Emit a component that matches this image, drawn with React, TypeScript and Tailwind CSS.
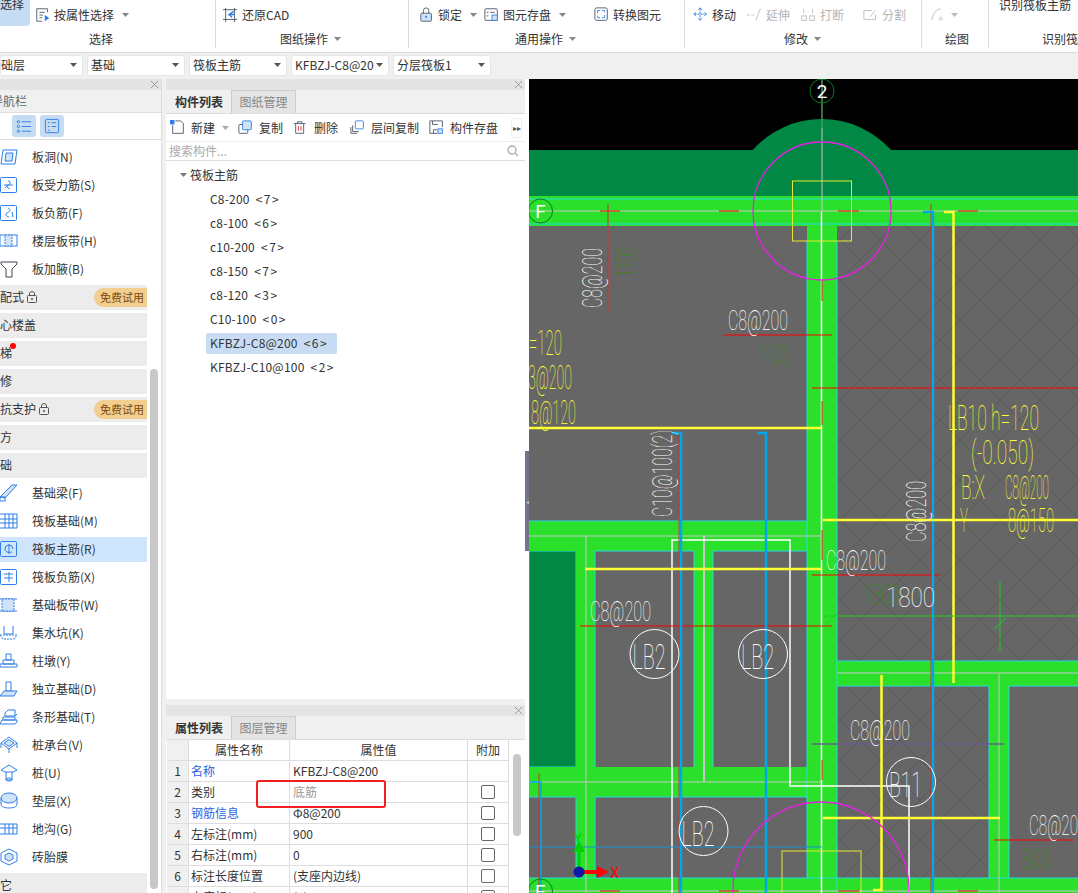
import type { ReactNode } from "react";

const B = "#2f7fe6";
const L = "#cfe2fa";

function Caret({ c = "#888" }: { c?: string }) {
  return (
    <svg width="7" height="4" viewBox="0 0 7 4" className="shrink-0">
      <path d="M0 0h7L3.5 4z" fill={c} />
    </svg>
  );
}

function Ico({ children, w = 18, c = B }: { children: ReactNode; w?: number; c?: string }) {
  return (
    <svg width={w} height={w} viewBox="0 0 18 18" fill="none" stroke={c} strokeWidth="1" className="shrink-0">
      {children}
    </svg>
  );
}

const DK = "#4a5568";

function TopItem({ icon, text, caret, off, ml }: { icon: ReactNode; text: string; caret?: boolean; off?: boolean; ml: string }) {
  return (
    <div className={`flex items-center gap-[3px] ${ml} ${off ? "text-[#b4b4b4]" : "text-[#333]"}`}>
      <Ico w={16}>{icon}</Ico>
      <span>{text}</span>
      {caret && <span className="ml-[5px]"><Caret /></span>}
    </div>
  );
}

function Ribbon() {
  return (
    <div className="flex h-[53px] shrink-0 border-b border-[#dcdcdc] bg-white text-[12px] text-[#333]">
      <div className="w-[215px]">
        <div className="flex h-[27px] items-start">
          <div className="h-[26px] w-[30px] overflow-hidden rounded-br-[4px] bg-[#c5dcf3] pl-0 text-[12px] leading-[8px]">选择</div>
          <div className="mt-[6px] ml-[5px] flex items-center gap-[3px]">
            <Ico w={16}>
              <path d="M14 6V2H2v14h6M5 6h6M5 9h4M5 12h3" stroke={DK} />
              <path d="M11 9l5 3.5-5 3.5z" fill={B} stroke="none" />
            </Ico>
            <span>按属性选择</span>
            <span className="ml-[5px]"><Caret /></span>
          </div>
        </div>
        <div className="pl-[89px] leading-[24px]">选择</div>
      </div>
      <div className="h-12 w-px bg-[#ddd]" />
      <div className="w-[192px]">
        <div className="flex h-[27px] items-center pt-[3px]">
          <TopItem
            ml="ml-[7px]"
            text="还原CAD"
            icon={
              <>
                <path d="M3 1v16M13 1v16M0 3h16M0 14h16" stroke={DK} />
                <path d="M12 5L7 8.500h6M7 8.500l3 3" stroke={B} strokeWidth="1.600" />
              </>
            }
          />
        </div>
        <div className="flex items-center gap-[6px] pl-[64px] leading-[24px]">图纸操作<Caret /></div>
      </div>
      <div className="h-12 w-px bg-[#ddd]" />
      <div className="w-[275px]">
        <div className="flex h-[27px] items-center pt-[3px]">
          <TopItem
            ml="ml-[10px]"
            text="锁定"
            caret
            icon={
              <>
                <rect x="2" y="7" width="12" height="9" rx="1.500" stroke={DK} fill={L} />
                <path d="M5 7V4a3 3 0 016 0v3" stroke={DK} />
                <circle cx="8" cy="11" r="1.200" fill={B} stroke="none" />
              </>
            }
          />
          <TopItem
            ml="ml-[7px]"
            text="图元存盘"
            caret
            icon={
              <>
                <rect x="1" y="2" width="14" height="13" rx="1" stroke={DK} />
                <path d="M3 6h2M7 6h5M3 10h2" stroke={DK} />
                <rect x="9" y="9" width="6" height="6" fill={L} stroke={B} />
              </>
            }
          />
          <TopItem
            ml="ml-[28px]"
            text="转换图元"
            icon={
              <>
                <rect x="1" y="1" width="14" height="14" rx="2" stroke={DK} />
                <path d="M4 7V4h3M12 9v3H9M9 4h3v2M7 12H4v-2" stroke={B} />
              </>
            }
          />
        </div>
        <div className="flex items-center gap-[6px] pl-[106px] leading-[24px]">通用操作<Caret /></div>
      </div>
      <div className="h-12 w-px bg-[#ddd]" />
      <div className="w-[236px]">
        <div className="flex h-[27px] items-center pt-[3px]">
          <TopItem
            ml="ml-[8px]"
            text="移动"
            icon={<path d="M8 1v14M1 8h14M8 1L6 3.500M8 1l2 2.500M8 15l-2-2.500M8 15l2-2.500M1 8l2.500-2M1 8l2.500 2M15 8l-2.500-2M15 8l-2.500 2" strokeDasharray="3 1" />}
          />
          <TopItem
            off
            ml="ml-[11px]"
            text="延伸"
            icon={<path d="M0 9h3M5 9h3M10 15l5-13" stroke="#bbb" />}
          />
          <TopItem
            off
            ml="ml-[11px]"
            text="打断"
            icon={
              <>
                <rect x="1" y="10" width="5" height="5" stroke="#bbb" />
                <rect x="10" y="10" width="5" height="5" stroke="#bbb" />
                <path d="M3 2v5M13 2v5" stroke="#bbb" />
              </>
            }
          />
          <TopItem
            off
            ml="ml-[19px]"
            text="分割"
            icon={<path d="M10 4H1v10h13V8M8 11l6-7" stroke="#bbb" />}
          />
        </div>
        <div className="flex items-center gap-[6px] pl-[99px] leading-[24px]">修改<Caret /></div>
      </div>
      <div className="h-12 w-px bg-[#ddd]" />
      <div className="w-[66px]">
        <div className="flex h-[27px] items-center gap-[5px] pt-[3px] pl-[8px]">
          <Ico w={16}><path d="M2 15C3 7 7 3 12 2" stroke="#bbb" /><circle cx="12" cy="13" r="1.500" stroke="#bbb" /></Ico>
          <Caret c="#bbb" />
        </div>
        <div className="pl-[23px] leading-[24px]">绘图</div>
      </div>
      <div className="h-12 w-px bg-[#ddd]" />
      <div className="min-w-0 flex-1 overflow-hidden whitespace-nowrap">
        <div className="h-[27px] pl-[10px] leading-[9px]">识别筏板主筋</div>
        <div className="pl-[53px] leading-[24px]">识别筏板</div>
      </div>
    </div>
  );
}

function Select({ w, text, first }: { w: string; text: string; first?: boolean }) {
  return (
    <div className={`flex h-[21px] items-center justify-between rounded-[3px] border border-[#e6e6e6] bg-white pr-[5px] ${first ? "pl-0" : "pl-[3px]"} ${w}`}>
      <span className="overflow-hidden whitespace-nowrap">{text}</span>
      <span className="ml-[2px]"><Caret c="#555" /></span>
    </div>
  );
}

function Selectors() {
  return (
    <div className="flex h-[26px] shrink-0 items-center gap-[4px] bg-[#f0f0f0] pb-[2px] text-[12px] text-[#333]">
      <Select first w="w-[83px]" text="础层" />
      <Select w="w-[98px]" text="基础" />
      <Select w="w-[98px]" text="筏板主筋" />
      <Select w="w-[98px]" text="KFBZJ-C8@200" />
      <Select w="w-[98px]" text="分层筏板1" />
    </div>
  );
}

function TitleBar() {
  return (
    <div className="flex h-[11px] shrink-0 items-center justify-end bg-[#e4e4e4] pr-[3px]">
      <svg width="7" height="7" viewBox="0 0 7 7" stroke="#999"><path d="M0 0l7 7M7 0L0 7" /></svg>
    </div>
  );
}

function Lock() {
  return (
    <svg width="10" height="12" viewBox="0 0 10 12" fill="none" stroke="#555" className="ml-[3px]">
      <rect x="0.500" y="4.500" width="9" height="7" rx="1" />
      <path d="M2.500 4.500V3a2.500 2.500 0 015 0v1.500" />
      <circle cx="5" cy="8" r="1" fill="#555" stroke="none" />
    </svg>
  );
}

function Trial() {
  return (
    <span className="mt-[2px] ml-auto flex h-[19px] w-[53px] items-center justify-center rounded-l-full bg-[#f2cf8e] pl-[3px] text-[11px] text-[#7a4a10]">
      免费试用
    </span>
  );
}

const box = <rect x="0.500" y="1.500" width="16" height="15" rx="1" />;

const navItems: { name: string; icon?: ReactNode; head?: boolean; sel?: boolean; lock?: boolean; dot?: boolean }[] = [
  { name: "板洞(N)", icon: <><path d="M3 2h14l-2 14H1z" /><path d="M6 5h7l-1 8H5z" fill={L} /></> },
  { name: "板受力筋(S)", icon: <>{box}<path d="M4 9h9M8 5c3 0 3 3 0 4s1 4 2 4M5 12l3-3" /></> },
  { name: "板负筋(F)", icon: <>{box}<path d="M8 4c3 1 2 4-1 5s0 4 2 4M12 8l1 5" /></> },
  { name: "楼层板带(H)", icon: <><rect x="0" y="3" width="17" height="11" /><rect x="5" y="3" width="7" height="11" fill={L} strokeDasharray="2 1" /></> },
  { name: "板加腋(B)", icon: <path d="M1 2h16v2l-5 5v8H6V9L1 4z" stroke="#445" /> },
  { name: "配式", head: true, lock: true },
  { name: "心楼盖", head: true },
  { name: "梯", head: true, dot: true },
  { name: "修", head: true },
  { name: "抗支护", head: true, lock: true },
  { name: "方", head: true },
  { name: "础", head: true },
  { name: "基础梁(F)", icon: <><path d="M0 13L12 1h5L5 14z" fill={L} /><rect x="0" y="13" width="5" height="4" /></> },
  { name: "筏板基础(M)", icon: <path d="M0 2h17v14H0M0 7h17M0 11h17M5 2v14M9 2v14M13 2v14" /> },
  { name: "筏板主筋(R)", sel: true, icon: <>{box}<path d="M9 4v10M5 9a4 4 0 018 0" /><path d="M5 9c0 3 3 4 7 3" /></> },
  { name: "筏板负筋(X)", icon: <>{box}<path d="M4 6h9M4 10h9M9 4v10" /></> },
  { name: "基础板带(W)", icon: <><path d="M0 3h17M0 15h17" /><rect x="2" y="3" width="12" height="12" fill={L} strokeDasharray="2 1" /></> },
  { name: "集水坑(K)", icon: <><path d="M4 2v8h9V2" /><path d="M0 11h17l-3 4H3z" strokeDasharray="2 1" /></> },
  { name: "柱墩(Y)", icon: <path d="M6 2h5v6H6zM3 8h11v4H3zM0 12h17v3H0z" /> },
  { name: "独立基础(D)", icon: <><path d="M6 2h5v9H6z" /><path d="M0 16l4-5h13l-3 5z" fill={L} /></> },
  { name: "条形基础(T)", icon: <path d="M5 5l3-3h7v6H5zM3 9h12v3H3zM0 16l2-4h15v2l-2 2zM15 8l2-2" /> },
  { name: "桩承台(V)", icon: <><path d="M9 1l8 6-8 6-8-6z" /><path d="M1 7v5M17 7v5M9 13v4" /><path d="M4 7l5-3.500 5 3.500-5 3.500z" fill={L} /></> },
  { name: "桩(U)", icon: <><path d="M1 6l8-5 8 5-4 2H5z" /><path d="M6 8v8h6V8" /><ellipse cx="9" cy="15.500" rx="3" ry="1.500" /></> },
  { name: "垫层(X)", icon: <><ellipse cx="9" cy="6" rx="8" ry="5" fill={L} /><path d="M1 6v6c0 3 4 4 8 4s8-1 8-4V6" /></> },
  { name: "地沟(G)", icon: <path d="M0 4h17v10H0M0 8h17M5 4v10M9 4v10M13 4v10" /> },
  { name: "砖胎膜", icon: <><path d="M9 1l8 4v8l-8 4-8-4V5z" /><path d="M9 5l4 2v4l-4 2-4-2V7z" fill={L} /></> },
  { name: "它", head: true },
];

function LeftPanel() {
  return (
    <div className="flex w-[162px] shrink-0 flex-col overflow-hidden border-r border-[#ddd] bg-white text-[12px] text-[#333]">
      <TitleBar />
      <div className="flex h-[23px] shrink-0 items-center overflow-hidden border-b border-[#ddd] bg-[#f0f0f0] whitespace-nowrap text-[#666]">
        <span className="-ml-[9px]">导航栏</span>
      </div>
      <div className="flex h-[27px] shrink-0 items-center gap-[4px] border-b border-[#ddd] pl-[12px]">
        <div className="flex h-[22px] w-[24px] items-center justify-center rounded-[3px] bg-[#c5dcf3]">
          <Ico w={17}><path d="M6 4h10M6 9h10M6 14h10" /><circle cx="2.500" cy="4" r="1.200" /><circle cx="2.500" cy="9" r="1.200" /><circle cx="2.500" cy="14" r="1.200" /></Ico>
        </div>
        <div className="flex h-[22px] w-[24px] items-center justify-center rounded-[3px] bg-[#c5dcf3]">
          <Ico w={17}><rect x="1.500" y="1.500" width="14" height="14" rx="1" /><path d="M4 5h2M8 5h5M4 9h2M8 9h5M4 13h2" /></Ico>
        </div>
      </div>
      <div className="flex min-h-0 flex-1 pt-[5px]">
        <div className="w-[147px] shrink-0">
          {navItems.map((n) => (
            <div
              key={n.name}
              className={`relative mb-[3px] flex h-[25px] items-center pb-[2px] whitespace-nowrap ${n.head ? "bg-[#ececec]" : ""} ${n.sel ? "bg-[#cfe5fd]" : ""}`}
            >
              {n.icon && (
                <span className="w-[32px] shrink-0">
                  <Ico c={n.name === "板加腋(B)" ? "#445" : B}>{n.icon}</Ico>
                </span>
              )}
              <span>{n.name}</span>
              {n.lock && <Lock />}
              {n.lock && <Trial />}
              {n.dot && <span className="absolute top-[2px] left-[10px] h-[6px] w-[6px] rounded-full bg-[#f00]" />}
            </div>
          ))}
        </div>
        <div className="mt-[224px] ml-[3px] h-[520px] w-[8px] shrink-0 rounded-full bg-[#c8c8c8]" />
      </div>
    </div>
  );
}

function Tabs({ a, b }: { a: string; b: string }) {
  return (
    <div className="flex h-[24px] shrink-0 items-end border-b border-[#ddd] bg-[#f0f0f0] pl-px text-[12px]">
      <div className="flex h-[23px] w-[64px] items-center justify-center font-bold text-[#333]">{a}</div>
      <div className="flex h-[23px] w-[65px] items-center justify-center border border-b-0 border-[#ccc] bg-[#e4e4e4] text-[#888]">{b}</div>
    </div>
  );
}

function ToolBtn({ icon, text, ml }: { icon: ReactNode; text: string; ml: string }) {
  return (
    <div className={`flex items-center gap-[5px] ${ml}`}>
      <Ico w={16}>{icon}</Ico>
      <span className="whitespace-nowrap">{text}</span>
    </div>
  );
}

const comps = [
  ["C8-200", "<7>"],
  ["c8-100", "<6>"],
  ["c10-200", "<7>"],
  ["c8-150", "<7>"],
  ["c8-120", "<3>"],
  ["C10-100", "<0>"],
  ["KFBZJ-C8@200", "<6>"],
  ["KFBZJ-C10@100", "<2>"],
];

function ComponentList() {
  return (
    <div className="flex h-[620px] shrink-0 flex-col bg-white text-[12px] text-[#333]">
      <TitleBar />
      <Tabs a="构件列表" b="图纸管理" />
      <div className="flex h-[28px] shrink-0 items-center border-b border-[#eee]">
        <ToolBtn
          ml="ml-[4px]"
          text="新建"
          icon={
            <>
              <path d="M3 6v9h12V4l-3-3H6" stroke={DK} />
              <rect x="0" y="0" width="5" height="5" fill={B} stroke="none" />
            </>
          }
        />
        <span className="mr-[9px] ml-[7px]"><Caret c="#aaa" /></span>
        <ToolBtn
          ml=""
          text="复制"
          icon={<><rect x="1" y="5" width="10" height="10" rx="1" stroke={DK} /><rect x="5" y="1" width="10" height="10" rx="1" fill={L} /></>}
        />
        <ToolBtn
          ml="ml-[10px]"
          text="删除"
          icon={<><path d="M1 4h13M5 4V2h5v2M3 4v11h9V4" stroke={DK} /><path d="M6 7v5M9 7v5" stroke="#d22" /></>}
        />
        <ToolBtn
          ml="ml-[12px]"
          text="层间复制"
          icon={<><path d="M1 8v7h7M3 6v7h7" stroke={DK} /><rect x="6" y="1" width="9" height="9" rx="1" /></>}
        />
        <ToolBtn
          ml="ml-[10px]"
          text="构件存盘"
          icon={<><path d="M9 15H1V1h14v7M5 15v-4h4M4 1v4h6" stroke={DK} /><rect x="10" y="10" width="5" height="5" fill={L} /></>}
        />
        <div className="ml-[13px] flex h-[20px] w-[11px] items-center justify-center rounded-[3px] border border-[#eee] text-[8px] text-[#555]">▸▸</div>
      </div>
      <div className="flex h-[19px] shrink-0 items-center justify-between border-b border-[#ddd] pr-[6px] pl-[3px] text-[#aaa]">
        <span>搜索构件...</span>
        <svg width="12" height="12" viewBox="0 0 12 12" fill="none" stroke="#aaa" strokeWidth="1.300"><circle cx="5" cy="5" r="4" /><path d="M8 8l3 3" /></svg>
      </div>
      <div className="flex-1 pt-[2px]">
        <div className="flex h-[24px] items-center gap-[4px] pl-[14px]">
          <Caret c="#777" />
          <span className="-ml-px">筏板主筋</span>
        </div>
        {comps.map(([name, count], i) => (
          <div key={name} className="flex h-[24px] items-center pl-[40px]">
            <span className={`flex h-[21px] items-center rounded-[2px] pl-[4px] tracking-[0.2px] ${i === 6 ? "w-[131px] bg-[#c8ddf3]" : ""}`}>
              {name}
              <span className="ml-[6px] tracking-[1.5px]">{count}</span>
            </span>
          </div>
        ))}
      </div>
    </div>
  );
}

const props: { n: number; name: string; value: string; link?: boolean; muted?: boolean; noCheck?: boolean }[] = [
  { n: 1, name: "名称", value: "KFBZJ-C8@200", link: true, noCheck: true },
  { n: 2, name: "类别", value: "底筋", muted: true },
  { n: 3, name: "钢筋信息", value: "Φ8@200", link: true },
  { n: 4, name: "左标注(mm)", value: "900" },
  { n: 5, name: "右标注(mm)", value: "0" },
  { n: 6, name: "标注长度位置", value: "(支座内边线)" },
  { n: 7, name: "上度标(mm)", value: "(0)" },
];

function PropertyList() {
  const cell = "flex items-center border-r border-b border-[#ddd]";
  return (
    <div className="relative flex min-h-0 flex-1 flex-col overflow-hidden bg-white text-[12px] text-[#333]">
      <TitleBar />
      <Tabs a="属性列表" b="图层管理" />
      <div className="flex min-h-0 flex-1 pl-px">
        <div className="w-[342px] shrink-0">
          <div className="grid grid-cols-[22px_101px_178px_41px]">
            <div className={`${cell} h-[21px] bg-[#f0f0f0]`} />
            <div className={`${cell} h-[21px] justify-center`}>属性名称</div>
            <div className={`${cell} h-[21px] justify-center`}>属性值</div>
            <div className={`${cell} h-[21px] justify-center`}>附加</div>
            {props.map((p) => (
              <div key={p.n} className="contents">
                <div className={`${cell} h-[21px] justify-center bg-[#f0f0f0]`}>{p.n}</div>
                <div className={`${cell} h-[21px] pl-[2px] ${p.link ? "text-[#2a62e0]" : ""}`}>{p.name}</div>
                <div className={`${cell} h-[21px] pl-[3px] ${p.muted ? "text-[#999]" : ""}`}>{p.value}</div>
                <div className={`${cell} h-[21px] justify-center`}>
                  {!p.noCheck && <span className="h-[14px] w-[14px] rounded-[2px] border border-[#666] bg-white" />}
                </div>
              </div>
            ))}
          </div>
        </div>
        <div className="mt-[14px] ml-[4px] h-[82px] w-[8px] rounded-full bg-[#c8c8c8]" />
      </div>
      <div className="absolute top-[75px] left-[90px] h-[28px] w-[130px] rounded-[3px] border-2 border-[#f02020]" />
    </div>
  );
}

function Cad({ t, x, y, w, h, c = "#fff", rot }: { t: string; x: number; y: number; w: number; h: number; c?: string; rot?: boolean }) {
  return (
    <text
      x={x}
      y={y}
      fontSize={h * 1.4}
      fontWeight="100"
      textLength={w}
      lengthAdjust="spacingAndGlyphs"
      fill={c}
      transform={rot ? `rotate(-90 ${x} ${y})` : undefined}
    >
      {t}
    </text>
  );
}

const G = "#2be02b";
const DG = "#008844";
const CY = "#22dddd";
const SK = "#00a8e8";
const Y = "#ffff33";
const R = "#ff0000";
const T = "#2e8b00";

function AxisMark({ t, x, y }: { t: string; x: number; y: number }) {
  return (
    <>
      <circle cx={x} cy={y} r="12" fill="none" stroke="#0b7a20" />
      <text x={x} y={y + 7} textAnchor="middle" fontSize="19" fill="#fff">{t}</text>
    </>
  );
}

function Bubble({ t, x, y }: { t: string; x: number; y: number }) {
  return (
    <>
      <circle cx={x} cy={y} r="24.500" fill="none" stroke="#fff" />
      <Cad t={t} x={x - 22} y={y + 15} w={33} h={25} />
    </>
  );
}

function Canvas() {
  return (
    <div className="min-w-0 flex-1 overflow-hidden bg-[#666]">
      <svg width="549" height="814" viewBox="529 79 549 814" className="block font-['Roboto','Liberation_Sans',sans-serif]">
        <defs>
          <pattern id="hatch" width="40" height="40" patternUnits="userSpaceOnUse">
            <path d="M0 0l40 40M40 0L0 40" stroke="#5a5a5a" strokeWidth="1" />
          </pattern>
        </defs>
        <rect x="837" y="226" width="241" height="435" fill="url(#hatch)" />
        <rect x="837" y="686" width="152" height="192" fill="url(#hatch)" />

        <rect x="529" y="79" width="549" height="71" fill="#000" />
        <rect x="529" y="150" width="549" height="46" fill={DG} />
        <path d="M752.500 150A93 93 0 01891 150z" fill={DG} />
        <rect x="529" y="551" width="47" height="216" fill={DG} stroke={CY} />

        <g fill={G}>
          <rect x="529" y="196" width="549" height="30" />
          <rect x="807" y="226" width="30" height="667" />
          <rect x="529" y="521" width="278" height="30" />
          <rect x="576" y="551" width="19" height="216" />
          <rect x="694" y="551" width="19" height="216" />
          <rect x="529" y="767" width="278" height="30" />
          <rect x="576" y="797" width="19" height="81" />
          <rect x="529" y="878" width="549" height="15" />
          <rect x="837" y="661" width="241" height="25" />
          <rect x="989" y="686" width="20" height="192" />
        </g>

        <g fill="none" stroke={CY}>
          <path d="M529 199H1078M529 224H1078" />
          <path d="M807 241V878M837 241V893" />
          <path d="M529 521H807M529 878H1078M837 661H1078" />
          <path d="M595 767V551H694V767M713 767V551H807M595 878V797H807" />
          <path d="M529 797H576V878M837 686H989V878M1078 686H1009V878" />
        </g>

        <g fill="none" stroke="#c8c8c8">
          <path d="M822 79V211" />
          <path d="M529 211H1078" />
          <path d="M529 536H822M529 782H822M837 673H1078M529 891H1078" />
          <path d="M586 536V893M999 674V893" />
          <path d="M704 536V781" strokeWidth="2" />
        </g>
        <path d="M822 79V128" stroke="#0b7a20" />
        <path d="M821.500 212V893" stroke="#fff" strokeWidth="1.500" />

        <g fill="none" stroke="#fff" strokeWidth="1.500">
          <path d="M672 893V540H790V786H909V893" />
        </g>

        <g fill="none" stroke="#c33" >
          <path d="M608 204V313M931 204V893M679 432V893M539 773V893" />
        </g>
        <g fill="none" stroke={R} strokeWidth="1">
          <path d="M600 211H620M719 211H739M838 211H859M958 211H978" />
          <path d="M723 335H832M812 388H1078M812 575H940M580 626H832M812 744H1004M994 840H1073M600 891H620M719 891H739M838 891H859M958 891H978" />
          <path d="M822 281V301M822 401V425M822 530V560M822 760V780" />
        </g>

        <g fill="none" stroke={SK} strokeWidth="2.500">
          <path d="M672 433H681V893M757 433H766V893M923 212H933V893" />
          <path d="M530 782H541V893" strokeWidth="1.500" />
        </g>
        <path d="M812 744H1004M529 847H822" stroke="#1c8fd0" />

        <g fill="none" stroke={Y} strokeWidth="2.500">
          <path d="M529 428H821M585 569H821M823 520H1078M823 818H1000" />
          <path d="M944 212H953.500V683M881.500 675V890H873" />
        </g>
        <rect x="792.500" y="181" width="59" height="60" fill="none" stroke="#e6e633" />
        <rect x="782" y="851" width="79" height="60" fill="none" stroke="#e6e633" />

        <circle cx="822" cy="211" r="69" fill="none" stroke="#e81ee8" strokeWidth="1.300" />
        <circle cx="821" cy="890" r="88" fill="none" stroke="#e81ee8" strokeWidth="1.300" />

        <path d="M823 616H1078M1000 582V651" stroke="#22cc22" fill="none" />
        <path d="M994 629l12-11M824 626l12-12" stroke="#22cc22" fill="none" />

        <Cad t="C8@200" x={602} y={308} w={60} h={20} rot />
        <Cad t="1100" x={636} y={277} w={30} h={20} c={T} rot />
        <Cad t="C8@200" x={728} y={330} w={60} h={20} />
        <Cad t="1100" x={758} y={364} w={30} h={20} c={T} />
        <Cad t="=120" x={529} y={355} w={33} h={25} c={Y} />
        <Cad t="3@200" x={528} y={389} w={44} h={24} c={Y} />
        <Cad t="8@120" x={531} y={424} w={45} h={24} c={Y} />
        <Cad t="C10@100(2)" x={672} y={517} w={87} h={20} rot />
        <Cad t="LB10 h=120" x={948} y={430} w={91} h={25} c={Y} />
        <Cad t="(-0.050)" x={971} y={464} w={63} h={24} c={Y} />
        <Cad t="B:X" x={961} y={499} w={24} h={24} c={Y} />
        <Cad t="C8@200" x={1005} y={499} w={44} h={24} c={Y} />
        <Cad t="Y" x={960} y={532} w={8} h={24} c={Y} />
        <Cad t="8@150" x={1008} y={532} w={46} h={24} c={Y} />
        <Cad t="C8@200" x={926} y={542} w={61} h={20} rot />
        <Cad t="C8@200" x={826} y={570} w={60} h={20} />
        <Cad t="1300" x={863} y={604} w={37} h={20} c={T} />
        <Cad t="1800" x={886} y={607} w={49} h={20} />
        <Cad t="C8@200" x={590} y={621} w={61} h={20} />
        <Cad t="C8@200" x={850} y={740} w={60} h={20} />
        <Cad t="C8@20" x={1029} y={835} w={49} h={20} />
        <Cad t="800" x={1022} y={869} w={28} h={20} c={T} />

        <Bubble t="LB2" x={654.500} y={654} />
        <Bubble t="LB2" x={763} y={654} />
        <Bubble t="LB2" x={703.500} y={831} />
        <Bubble t="B11" x={911} y={782} />

        <AxisMark t="2" x={822} y={91} />
        <AxisMark t="F" x={540.500} y={211} />
        <AxisMark t="E" x={540.500} y={891} />

        <path d="M579 872V848" stroke="#00d000" strokeWidth="3" />
        <path d="M573 852l6-11 6 11z" fill="#00d000" />
        <path d="M579 872H598" stroke={R} strokeWidth="4" />
        <path d="M597 866l12 6-12 6z" fill={R} />
        <circle cx="579" cy="872" r="5.500" fill="#0a1aa8" />
        <text x="610" y="878" fontSize="15" fill={R}>X</text>
        <text x="574" y="842" fontSize="13" fill="#00d000">Y</text>
      </svg>
    </div>
  );
}

export default function App() {
  return (
    <div className="flex h-[893px] w-[1078px] flex-col overflow-hidden bg-[#f0f0f0] font-['Noto_Sans_CJK_SC','Liberation_Sans',sans-serif]">
      <Ribbon />
      <Selectors />
      <div className="flex min-h-0 flex-1">
        <LeftPanel />
        <div className="ml-[4px] flex w-[359px] shrink-0 flex-col gap-[6px]">
          <ComponentList />
          <PropertyList />
        </div>
        <div className="w-[4px] shrink-0 bg-white pt-[372px]">
          <div className="flex h-[100px] w-[4px] items-center justify-center bg-[#6e7888] text-[6px] text-[#ccc]">◂</div>
        </div>
        <Canvas />
      </div>
    </div>
  );
}
